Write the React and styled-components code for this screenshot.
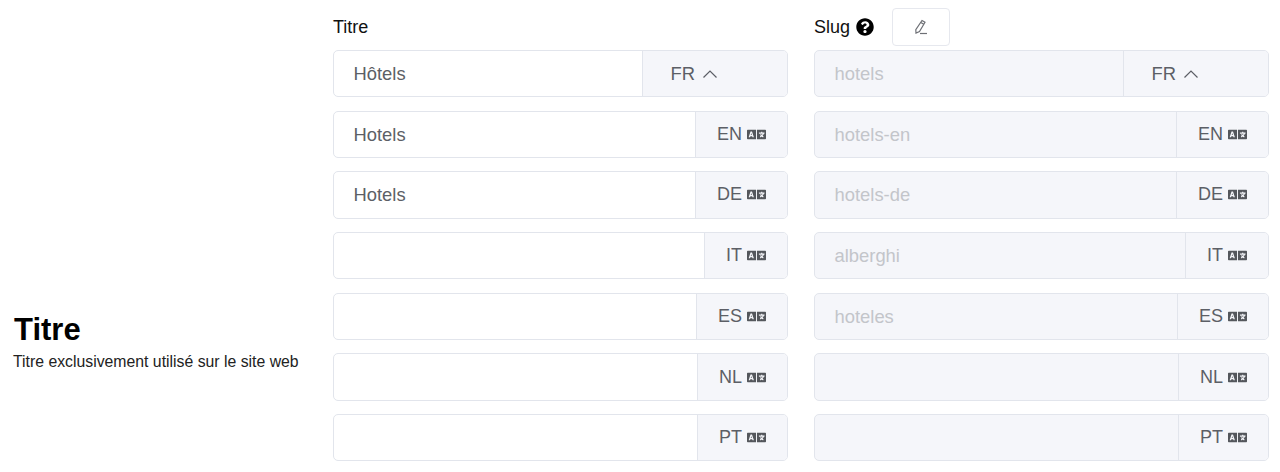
import styled, { createGlobalStyle } from "styled-components";
import { FaLanguage, FaQuestionCircle } from "react-icons/fa";

const GlobalStyle = createGlobalStyle`
  body {
    margin: 0;
    background: #fff;
    font-family: "Liberation Sans", Arial, sans-serif;
    color: #000;
  }
`;

const Page = styled.div`
  display: flex;
  height: 472px;
  overflow: hidden;
`;

const Intro = styled.div`
  width: 333px;
  padding: 313px 0 0 13px;
  box-sizing: border-box;
  flex: none;

  h2 {
    margin: 0 0 0 1px;
    font-size: 31px;
    line-height: 34px;
    font-weight: 700;
  }

  p {
    margin: 6px 0 0;
    font-size: 15.8px;
    line-height: 18px;
    color: #222;
  }
`;

const Columns = styled.div`
  display: flex;
  gap: 26px;
`;

const Column = styled.div`
  width: 455px;
  display: flex;
  flex-direction: column;
`;

const Label = styled.div`
  height: 50px;
  display: flex;
  align-items: center;
  font-size: 18px;
  padding-top: 4px;
  box-sizing: border-box;
  gap: 6px;
  color: #111;
`;

const EditButton = styled.button`
  width: 58px;
  height: 38px;
  margin-left: 12px;
  padding: 0;
  background: #fff;
  border: 1px solid #e6e8ee;
  border-radius: 4px;
  display: flex;
  align-items: center;
  justify-content: center;
`;

const Rows = styled.div`
  display: flex;
  flex-direction: column;
  gap: 13.5px;
`;

const Group = styled.div`
  display: flex;
  height: 47.2px;
  box-sizing: border-box;
  border: 1px solid #e2e5ec;
  border-radius: 5px;
  overflow: hidden;
  background: ${(p) => (p.$disabled ? "#f5f6fa" : "#fff")};
`;

const Value = styled.div`
  flex: 1;
  display: flex;
  align-items: center;
  padding: 1px 0 0 19.5px;
  font-size: 18.4px;
  color: ${(p) => (p.$disabled ? "#c3c5ca" : "#5c5f66")};
`;

const Addon = styled.div`
  display: flex;
  align-items: center;
  gap: ${(p) => (p.$open ? "7px" : "5px")};
  padding: ${(p) => (p.$open ? "1px 69px 0 27px" : "0 21px")};
  background: #f5f6fa;
  border-left: 1px solid #e2e5ec;
  font-size: ${(p) => (p.$open ? "18.4px" : "18px")};
  color: #5c5f66;
`;

const LangIcon = styled(FaLanguage)`
  width: 19px;
  height: 19px;
  color: #54575c;
`;

const ChevronUp = () => (
  <svg width="16" height="16" viewBox="0 0 16 16" fill="none" stroke="#5c5f66" strokeWidth="1.2">
    <path d="M1.500 11.500 8 5l6.500 6.500" />
  </svg>
);

const PencilIcon = () => (
  <svg width="16" height="16" viewBox="0 0 16 16" fill="none" stroke="#6e7076" strokeWidth="1.2">
    <path d="M9 1.500 12 3.200 6.500 12.500 3 14 2.800 10.700Z" />
    <path d="M7.800 3.400 10.800 5.200" />
    <path d="M7 14.500h7" />
  </svg>
);

const titles = [
  { lang: "FR", text: "Hôtels", open: true },
  { lang: "EN", text: "Hotels" },
  { lang: "DE", text: "Hotels" },
  { lang: "IT", text: "" },
  { lang: "ES", text: "" },
  { lang: "NL", text: "" },
  { lang: "PT", text: "" },
];

const slugs = [
  { lang: "FR", text: "hotels", open: true },
  { lang: "EN", text: "hotels-en" },
  { lang: "DE", text: "hotels-de" },
  { lang: "IT", text: "alberghi" },
  { lang: "ES", text: "hoteles" },
  { lang: "NL", text: "" },
  { lang: "PT", text: "" },
];

const LangRows = ({ items, disabled }) => (
  <Rows>
    {items.map((item) => (
      <Group key={item.lang} $disabled={disabled}>
        <Value $disabled={disabled}>{item.text}</Value>
        <Addon $open={item.open}>
          {item.lang}
          {item.open ? <ChevronUp /> : <LangIcon />}
        </Addon>
      </Group>
    ))}
  </Rows>
);

export default function App() {
  return (
    <Page>
      <GlobalStyle />
      <Intro>
        <h2>Titre</h2>
        <p>Titre exclusivement utilisé sur le site web</p>
      </Intro>
      <Columns>
        <Column>
          <Label>Titre</Label>
          <LangRows items={titles} />
        </Column>
        <Column>
          <Label>
            Slug
            <FaQuestionCircle size={18} color="#000" />
            <EditButton>
              <PencilIcon />
            </EditButton>
          </Label>
          <LangRows items={slugs} disabled />
        </Column>
      </Columns>
    </Page>
  );
}
